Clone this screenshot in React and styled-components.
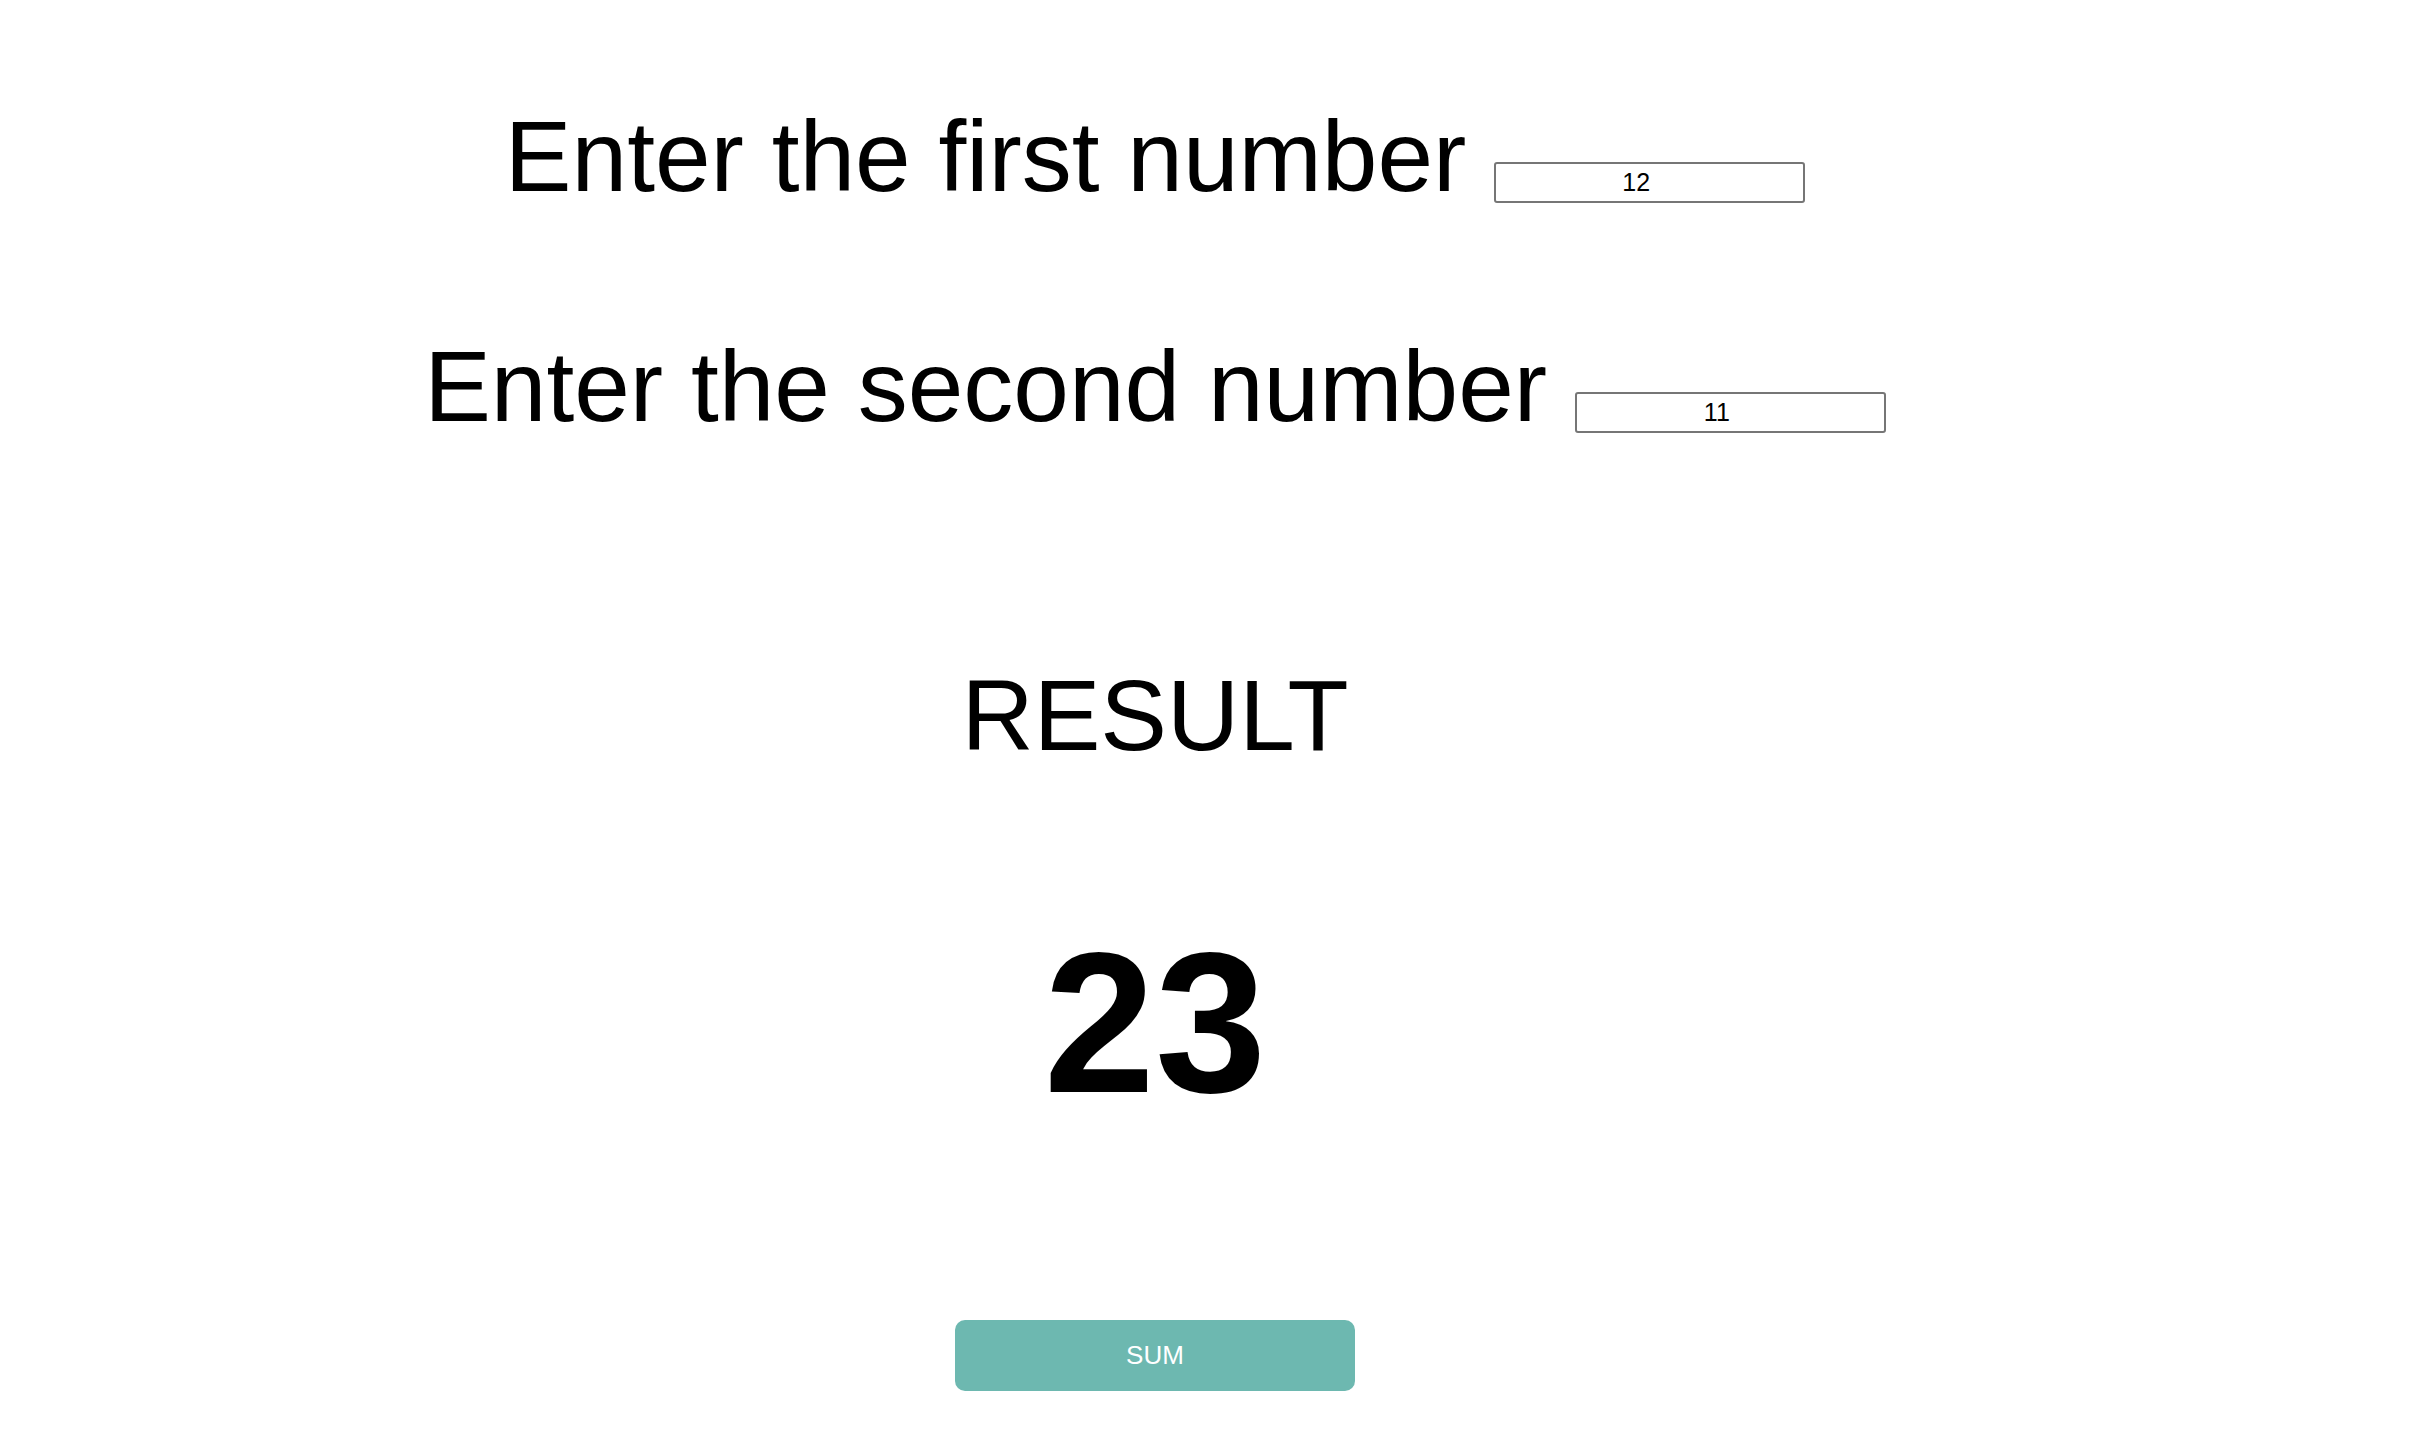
import React, { useState } from "react";
import styled, { createGlobalStyle } from "styled-components";

const GlobalStyle = createGlobalStyle`
  html, body {
    margin: 0;
    padding: 0;
    background: #ffffff;
  }
  body {
    font-family: "Liberation Sans", Arial, sans-serif;
    color: #000000;
  }
`;

const Page = styled.main`
  width: 2310px;
  display: flex;
  flex-direction: column;
  align-items: center;
  padding-top: 99px;
`;

const Field = styled.label`
  display: block;
  font-size: 100px;
  line-height: 115px;
  white-space: nowrap;
  margin-bottom: ${(p) => p.$gap}px;
`;

const NumberInput = styled.input`
  box-sizing: border-box;
  width: 311px;
  height: 41px;
  margin: 0;
  padding: 0 28px 0 1px;
  border: 2px solid #767676;
  border-radius: 3px;
  background: #ffffff;
  font-family: "Liberation Sans", Arial, sans-serif;
  font-size: 25px;
  color: #000000;
  text-align: center;
  vertical-align: baseline;
  outline: none;
  -moz-appearance: textfield;
  &::-webkit-inner-spin-button,
  &::-webkit-outer-spin-button {
    -webkit-appearance: none;
    margin: 0;
  }
`;

const ResultTitle = styled.h2`
  margin: 0 0 135px 0;
  font-size: 100px;
  line-height: 115px;
  font-weight: 400;
`;

const ResultValue = styled.div`
  font-size: 200px;
  line-height: 230px;
  font-weight: 700;
  margin-bottom: 182px;
`;

const SumButton = styled.button`
  width: 400px;
  height: 71px;
  border: none;
  border-radius: 10px;
  background: #6db8b0;
  color: #ffffff;
  font-family: "Liberation Sans", Arial, sans-serif;
  font-size: 26px;
  cursor: pointer;
  display: flex;
  align-items: center;
  justify-content: center;
`;

export default function App() {
  const [first, setFirst] = useState("12");
  const [second, setSecond] = useState("11");
  const [result, setResult] = useState(23);

  const handleSum = () => {
    setResult((Number(first) || 0) + (Number(second) || 0));
  };

  return (
    <>
      <GlobalStyle />
      <Page>
        <Field $gap={115}>
          Enter the first number{" "}
          <NumberInput
            type="number"
            value={first}
            onChange={(e) => setFirst(e.target.value)}
          />
        </Field>
        <Field $gap={214}>
          Enter the second number{" "}
          <NumberInput
            type="number"
            value={second}
            onChange={(e) => setSecond(e.target.value)}
          />
        </Field>
        <ResultTitle>RESULT</ResultTitle>
        <ResultValue>{result}</ResultValue>
        <SumButton type="button" onClick={handleSum}>
          SUM
        </SumButton>
      </Page>
    </>
  );
}
